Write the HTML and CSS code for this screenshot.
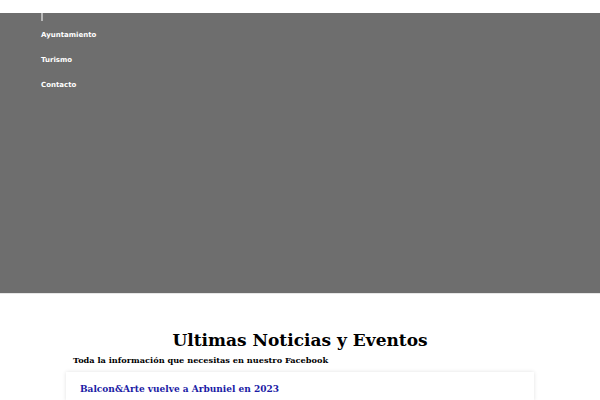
FILE: index.html
```html
<!DOCTYPE html>
<html lang="es">
<head>
<meta charset="utf-8">
<title>Arbuniel</title>
<link rel="stylesheet" href="styles.css">
</head>
<body>
<header class="hero">
  <div class="nav">
    <span class="tick"></span>
    <a class="nav-item" href="#">Ayuntamiento</a>
    <a class="nav-item" href="#">Turismo</a>
    <a class="nav-item" href="#">Contacto</a>
  </div>
</header>
<section class="news">
  <h1 class="news-title">Ultimas Noticias y Eventos</h1>
  <p class="news-sub">Toda la información que necesitas en nuestro Facebook</p>
  <div class="card">
    <a class="card-title" href="#">Balcon&amp;Arte vuelve a Arbuniel en 2023</a>
  </div>
</section>
</body>
</html>
```
FILE: styles.css
```css
html, body { margin: 0; padding: 0; background: #fff; }
body { font-family: "DejaVu Serif", serif; }
.hero {
  margin-top: 13px;
  height: 280px;
  background: #6e6e6e;
  border-bottom: 1px solid #e6e6e6;
}
.nav {
  display: flex;
  flex-direction: column;
  padding-left: 41px;
}
.tick {
  width: 2px;
  height: 8px;
  background: #b8b8b8;
  margin-bottom: 9px;
}
.nav-item {
  font-family: "DejaVu Sans", sans-serif;
  font-weight: bold;
  font-size: 7px;
  color: #fff;
  text-decoration: none;
  line-height: 10px;
  margin-bottom: 15px;
}
.news {
  padding: 0 66px;
}
.news-title {
  margin: 35px 0 0;
  text-align: center;
  font-size: 17px;
  line-height: 22px;
  font-weight: bold;
  color: #000;
}
.news-sub {
  margin: 4px 0 0 7px;
  font-size: 8.2px;
  line-height: 11px;
  font-weight: bold;
  color: #000;
}
.card {
  margin-top: 6px;
  padding: 5px 14px;
  box-shadow: 0 0 4px rgba(0,0,0,0.12);
  background: #fff;
}
.card-title {
  font-size: 9px;
  line-height: 14px;
  font-weight: bold;
  color: #1b1ba5;
  text-decoration: none;
}
```
